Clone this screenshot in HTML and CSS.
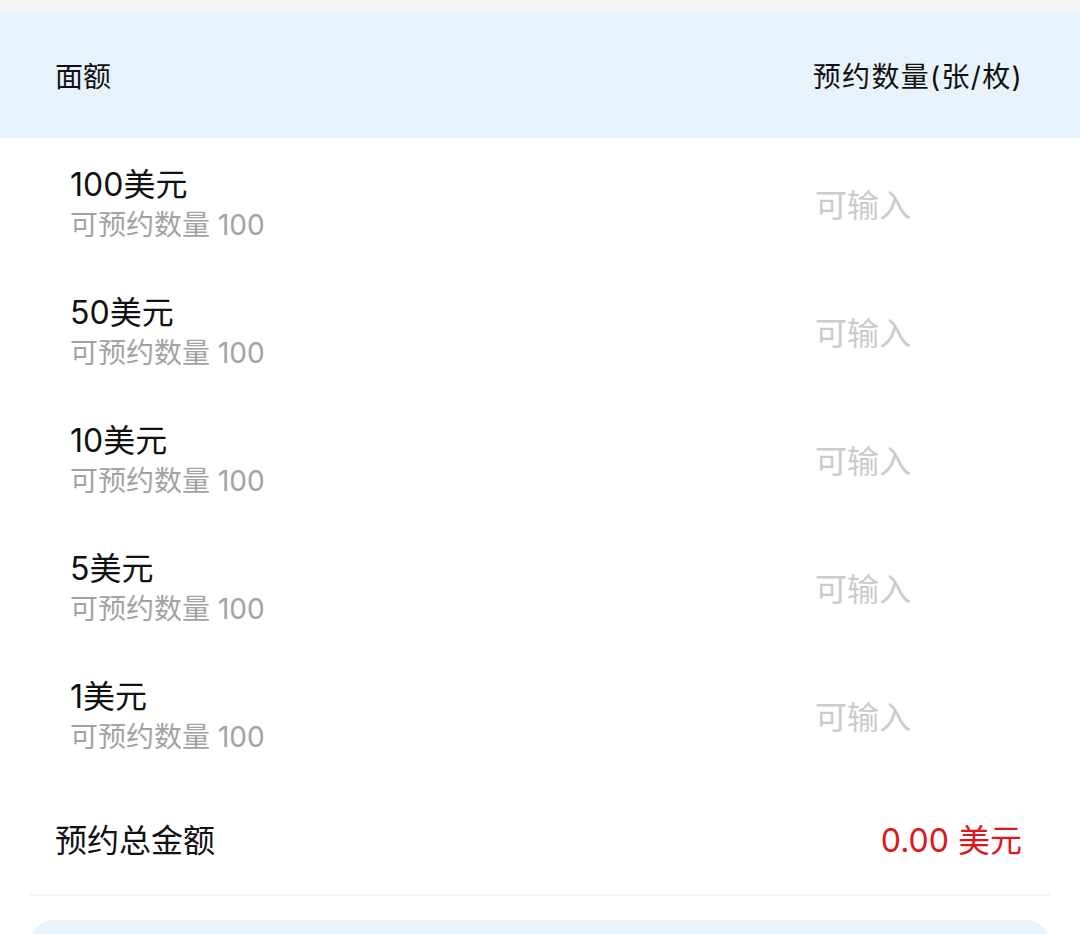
FILE: index.html
```html
<!DOCTYPE html>
<html lang="zh-CN">
<head>
<meta charset="UTF-8">
<meta name="viewport" content="width=device-width, initial-scale=1.0">
<title>预约</title>
<link rel="stylesheet" href="styles.css">
</head>
<body>

<div class="topbar"></div>

<div class="head">
  <span>面额</span>
  <span class="head-qty">预约数量(张/枚)</span>
</div>

<ul class="list">
  <li>
    <div class="info">
      <p class="title">100美元</p>
      <p class="sub">可预约数量 100</p>
    </div>
    <input class="qty" type="text" placeholder="可输入">
  </li>
  <li>
    <div class="info">
      <p class="title">50美元</p>
      <p class="sub">可预约数量 100</p>
    </div>
    <input class="qty" type="text" placeholder="可输入">
  </li>
  <li>
    <div class="info">
      <p class="title">10美元</p>
      <p class="sub">可预约数量 100</p>
    </div>
    <input class="qty" type="text" placeholder="可输入">
  </li>
  <li>
    <div class="info">
      <p class="title">5美元</p>
      <p class="sub">可预约数量 100</p>
    </div>
    <input class="qty" type="text" placeholder="可输入">
  </li>
  <li>
    <div class="info">
      <p class="title">1美元</p>
      <p class="sub">可预约数量 100</p>
    </div>
    <input class="qty" type="text" placeholder="可输入">
  </li>
</ul>

<div class="total">
  <span>预约总金额</span>
  <span class="total-num">0.00 美元</span>
</div>

<div class="line"></div>

<div class="tip"></div>

</body>
</html>
```

FILE: styles.css
```css
*{
  margin: 0;
  padding: 0;
  list-style: none;
  box-sizing: border-box;
}
body{
  background: #fff;
  color: #111;
  font-family: Inter, "Noto Sans CJK SC", "Noto Sans", sans-serif;
  overflow: hidden;
}
.topbar{
  height: 12px;
  background: #f5f5f5;
}
.head{
  height: 126px;
  display: flex;
  align-items: center;
  justify-content: space-between;
  padding: 0 57px 0 55px;
  background: #e8f2fb;
  font-size: 28px;
}
.head-qty{
  letter-spacing: 1.3px;
}
.list{
  padding-top: 3px;
}
.list li{
  height: 128px;
  display: flex;
  align-items: center;
  justify-content: space-between;
  padding: 0 56px 0 70px;
}
.info .title{
  font-size: 32px;
  line-height: 41px;
  color: #111;
}
.info .sub{
  font-size: 28px;
  line-height: 41px;
  color: #a3a3a3;
}
.qty{
  width: 209px;
  border: none;
  outline: none;
  background: transparent;
  font-family: inherit;
  font-size: 32px;
  color: #333;
}
.qty::placeholder{
  color: #cbcbcb;
}
.total{
  height: 113px;
  display: flex;
  align-items: center;
  justify-content: space-between;
  padding: 0 58px 0 55px;
  font-size: 32px;
}
.total-num{
  color: #e0141b;
}
.line{
  margin: 0 30px;
  border-top: 2px solid #f3f3f3;
}
.tip{
  height: 80px;
  margin: 24px 30px 0;
  border-radius: 24px;
  background: #e8f2fb;
}
```
